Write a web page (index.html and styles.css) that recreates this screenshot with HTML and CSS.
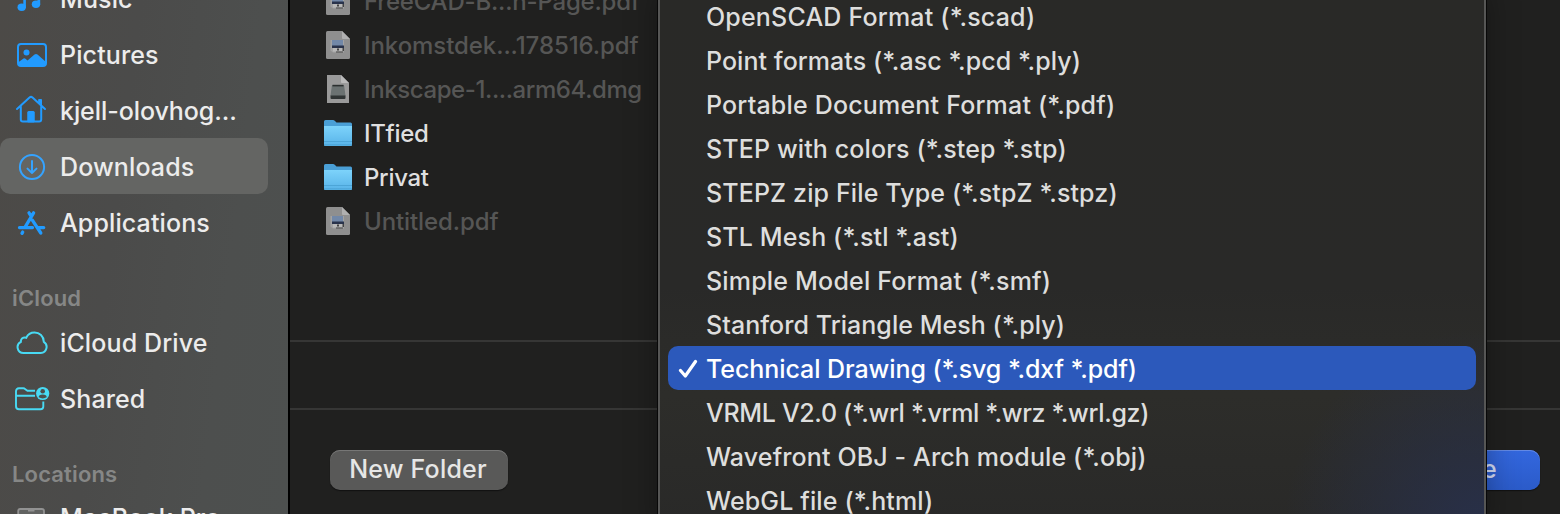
FILE: index.html
```html
<!DOCTYPE html>
<html lang="en">
<head>
<meta charset="utf-8">
<title>Save</title>
<link rel="stylesheet" href="styles.css">
</head>
<body>
<svg class="defs" width="0" height="0">
  <defs>
    <linearGradient id="folderFront" x1="0" y1="0" x2="0" y2="1"><stop offset="0" stop-color="#7dd3fb"/><stop offset="1" stop-color="#58b3e8"/></linearGradient>
    <symbol id="pdf" viewBox="0 0 24 28">
      <path d="M1.500 0H16L24 8V26.500Q24 28 22.500 28H1.500Q0 28 0 26.500V1.500Q0 0 1.500 0Z" fill="#8f8f8f"/>
      <path d="M16 0L24 8H17Q16 8 16 7Z" fill="#b0b0b0"/>
      <path d="M4.500 9h13.500v12.500H7l-2.500-2z" fill="#a3a3a3"/>
      <path d="M6 9h11v6H6z" fill="#7288a8"/>
      <path d="M6 14.500h12v2.500H6z" fill="#29334b"/>
      <path d="M7 17h10v3.500H7z" fill="#b8b8b8"/>
      <path d="M11 17.500h2v2h-2zM10 20.500h7v1h-7zM16.500 17h1.500v3h-1.500z" fill="#444"/>
    </symbol>
    <symbol id="dmg" viewBox="0 0 24 28">
      <path d="M1 0H15L23 8V28H1Z" fill="#9a9a9a"/>
      <path d="M15 0L23 8H16Q15 8 15 7Z" fill="#bababa"/>
      <path d="M7 10h10q1 0 1.200 1L19.500 21h-15L5.800 11Q6 10 7 10z" fill="#6b7272"/>
      <path d="M6.500 9.800h11v1.600h-11z" fill="#2c3030"/>
      <path d="M4.500 20.500h15v2.500q0 1-1 1h-13q-1 0-1-1z" fill="#303535"/>
    </symbol>
    <symbol id="folder" viewBox="0 0 28 26">
      <path d="M0 1.500Q0 0 1.500 0H9Q10 0 11 1L12.500 2.500H26.500Q28 2.500 28 4V24.500Q28 26 26.500 26H1.500Q0 26 0 24.500Z" fill="#4a9fd6"/>
      <path d="M0 6H28V24.500Q28 26 26.500 26H1.500Q0 26 0 24.500Z" fill="url(#folderFront)"/>
      <path d="M0 21.500H28M0 24.800H28" stroke="#489fd2" stroke-width=".8"/>
    </symbol>
  </defs>
</svg>
<div class="dialog">
  <nav class="sidebar">
    <div class="place low">
      <svg class="icon" viewBox="0 0 36 36" fill="#229bff"><ellipse cx="9.700" cy="27.300" rx="4.200" ry="3.700"/><ellipse cx="24" cy="24.300" rx="4.200" ry="3.700"/><path d="M11.300 8L28.200 4V24.500H25.400V11L13.900 13.500V27.500H11.300Z"/></svg>
      <span class="t-music">Music</span></div>
    <div class="place low">
      <svg class="icon" viewBox="0 0 36 36"><rect x="6" y="8.100" width="28" height="21.800" rx="3" fill="none" stroke="#229bff" stroke-width="2"/><circle cx="14.500" cy="16.500" r="3" fill="#229bff"/><path d="M6 26.500L11.500 22.500Q12.500 22 13.500 22.800L15.500 24.500L22.500 18.500Q24 17.400 25.500 18.500L34 26V28Q34 30 31.500 30H8.500Q6 30 6 28Z" fill="#229bff"/></svg>
      <span class="t-pictures">Pictures</span></div>
    <div class="place low">
      <svg class="icon" viewBox="0 0 36 36" fill="none" stroke="#229bff" stroke-width="2" stroke-linecap="round" stroke-linejoin="round"><path d="M5 17L17.500 5.500Q19 4.300 20.500 5.500L33 17M8.800 14.500V27.500Q8.800 29.500 10.800 29.500H27.200Q29.200 29.500 29.200 27.500V14.500"/><path d="M27 7.500H29.500V13L27 10.800Z" fill="#229bff" stroke-width="1"/><path d="M15.800 29.500V20Q15.800 19.500 16.300 19.500H21.700Q22.200 19.500 22.200 20V29.500Z" fill="#229bff" stroke-width="1"/></svg>
      <span class="t-home">kjell-olovhog...</span></div>
    <div class="place low selected">
      <svg class="icon" viewBox="0 0 36 36" fill="none" stroke="#35a3ff" stroke-width="2" stroke-linecap="round" stroke-linejoin="round"><circle cx="20" cy="19" r="12.100"/><path d="M20 13V25M15.500 20.600L20 25L24.500 20.600"/></svg>
      <span class="t-downloads">Downloads</span></div>
    <div class="place low">
      <svg class="icon" viewBox="0 0 36 36" fill="none" stroke="#229bff" stroke-width="3.300" stroke-linecap="round"><path d="M21.600 8.800L12.800 23.600M10.700 28.100L10 29.300M17 8.800L18.300 10.800M20.500 16.300L28.800 29M7.500 23.600H20.500M27 23.600H31.700"/></svg>
      <span class="t-apps">Applications</span></div>
    <h2 class="heading t-icloud">iCloud</h2>
    <div class="place">
      <svg class="icon" viewBox="0 0 36 36" fill="none" stroke="#48daf4" stroke-width="2"><path d="M11.500 28H28.800A6.100 6.100 0 0 0 31.800 16.800C31.700 11.300 27.500 7.500 22.500 7.500C18.500 7.500 15.600 9.800 14.300 12.700C11 11.700 8.600 14 8.900 16.800A5.900 5.900 0 0 0 11.500 28Z"/></svg>
      <span class="t-drive">iCloud Drive</span></div>
    <div class="place">
      <svg class="icon wide" viewBox="0 0 40 36" fill="none" stroke="#48daf4" stroke-width="1.900"><path d="M23 9.800H15.500L13 8Q12.400 7.300 11.200 7.300H7Q4 7.300 4 10.300V25.300Q4 28.300 7 28.300H28.500Q31.300 28.300 31.300 25.600V20.500M4 14.700H23"/><circle cx="30.700" cy="12.500" r="6.600" fill="#48daf4" stroke="none"/><circle cx="30.700" cy="10.200" r="2.300" fill="#4c4e4c" stroke="none"/><path d="M26.700 16.300Q26.700 13.500 30.700 13.500T34.700 16.300Q30.700 18.500 26.700 16.300Z" fill="#4c4e4c" stroke="none"/></svg>
      <span class="t-shared">Shared</span></div>
    <h2 class="heading t-locations">Locations</h2>
    <div class="place high">
      <svg class="icon" viewBox="0 0 36 36" fill="none" stroke="#929292" stroke-width="1.800"><path d="M6.200 27V10Q6.200 8 8.200 8H30Q32 8 32 10V27Z" fill="#626362"/><path d="M16 9H22.500" stroke-width="3"/></svg>
      <span class="t-mac">MacBook Pro</span></div>
  </nav>
  <main class="browser">
    <div class="files">
      <div class="file dim"><svg class="doc"><use href="#pdf"/></svg><span class="f1">FreeCAD-B...n-Page.pdf</span></div>
      <div class="file dim"><svg class="doc"><use href="#pdf"/></svg><span class="f2">Inkomstdek...178516.pdf</span></div>
      <div class="file dim"><svg class="doc"><use href="#dmg"/></svg><span class="f3">Inkscape-1....arm64.dmg</span></div>
      <div class="file"><svg class="folder"><use href="#folder"/></svg><span class="f4">ITfied</span></div>
      <div class="file"><svg class="folder"><use href="#folder"/></svg><span class="f5">Privat</span></div>
      <div class="file dim"><svg class="doc"><use href="#pdf"/></svg><span class="f6">Untitled.pdf</span></div>
    </div>
    <div class="options"></div>
    <footer class="actions">
      <button class="btn"><span>New Folder</span></button>
      <button class="btn primary"><span>Save</span></button>
    </footer>
  </main>
  <div class="menu">
    <div class="item"><span class="m1">OpenSCAD Format (*.scad)</span></div>
    <div class="item"><span class="m2">Point formats (*.asc *.pcd *.ply)</span></div>
    <div class="item"><span class="m3">Portable Document Format (*.pdf)</span></div>
    <div class="item"><span class="m4">STEP with colors (*.step *.stp)</span></div>
    <div class="item"><span class="m5">STEPZ zip File Type (*.stpZ *.stpz)</span></div>
    <div class="item"><span class="m6">STL Mesh (*.stl *.ast)</span></div>
    <div class="item"><span class="m7">Simple Model Format (*.smf)</span></div>
    <div class="item"><span class="m8">Stanford Triangle Mesh (*.ply)</span></div>
    <div class="item active"><svg class="check" viewBox="0 0 20 20"><path d="M2.500 12.500L7.300 18L17.500 3.500" fill="none" stroke="#fff" stroke-width="3.200" stroke-linecap="round" stroke-linejoin="round"/></svg><span class="m9">Technical Drawing (*.svg *.dxf *.pdf)</span></div>
    <div class="item"><span class="m10">VRML V2.0 (*.wrl *.vrml *.wrz *.wrl.gz)</span></div>
    <div class="item"><span class="m11">Wavefront OBJ - Arch module (*.obj)</span></div>
    <div class="item"><span class="m12">WebGL file (*.html)</span></div>
  </div>
</div>
</body>
</html>
```
FILE: styles.css
```css
* { box-sizing: border-box; }
body { margin: 0; background: #20201f; font-family: Inter, "Liberation Sans", sans-serif; font-size: 25px; font-weight: 450; font-feature-settings: "calt" 0; }
.defs { position: absolute; }
.dialog { position: relative; display: flex; width: 1560px; height: 514px; overflow: hidden; }
span { white-space: nowrap; }

.sidebar { flex: none; width: 290px; height: 514px; overflow: hidden; border-right: 2px solid #000; background: linear-gradient(97deg, #4c4a47 0%, #4b4b4a 40%, #4d4f4e 75%, #4d504f 100%); color: #ececec; }
.place { display: flex; align-items: center; gap: 20px; width: 268px; height: 56px; padding-left: 12px; border-radius: 10px; letter-spacing: .12px; }
.place:first-child { margin-top: -30px; }
.place.selected { background: #646563; }
.low span { padding-top: 2px; }
.high span { padding-bottom: 3px; }
.icon { flex: none; width: 36px; height: 36px; margin-right: -8px; }
.icon.wide { width: 40px; margin-right: -12px; }
.t-home { letter-spacing: -.08px; }
.heading { margin: 34px 0 0; padding-left: 12px; height: 31px; font-size: 22px; line-height: 29px; font-weight: 600; letter-spacing: .15px; color: #868786; }
.t-locations { margin-top: 32px; height: 32px; line-height: 31px; }

.browser { flex: 1; display: flex; flex-direction: column; background: #20201f; }
.files { height: 342px; flex: none; overflow: hidden; border-bottom: 2px solid #363635; }
.file { display: flex; align-items: center; height: 44px; padding-left: 34px; color: #dfdfdf; font-size: 24px; letter-spacing: -.3px; }
.file:first-child { margin-top: -21px; }
.file.dim { color: #565655; letter-spacing: -.1px; }
.doc { width: 24px; height: 28px; margin: 0 14px 0 2px; }
.folder { width: 28px; height: 26px; margin-right: 12px; }
.file .f1 { letter-spacing: -.2px; }
.file .f2 { letter-spacing: -.07px; }
.file .f3 { letter-spacing: -.4px; }
.options { flex: none; height: 68px; border-bottom: 2px solid #363635; }
.actions { display: flex; justify-content: space-between; padding: 40px 20px 0 40px; }
.btn { width: 178px; height: 40px; padding: 0 2px 2px 0; border: 0; border-radius: 10px; background: #595958; box-shadow: inset 0 1px #777776, 0 1px 1px #111; color: #e6e6e5; font: inherit; letter-spacing: .2px; }
.primary { background: linear-gradient(#3367de, #2b5bc9); box-shadow: inset 0 1px #6389e4, 0 1px 1px #111; padding: 0 43px 2px 0; text-align: right; color: #d5def6; }

.menu { position: absolute; left: 658px; top: -10px; width: 828px; height: 540px; padding: 4px 8px; border: 2px solid #565655; border-width: 0 2px; background: radial-gradient(ellipse 200px 200px at 100% 100%, #28304a, transparent), linear-gradient(#292927 0%, #292928 55%, #2d2d2a 75%, #292928 100%); box-shadow: 0 0 0 1px #080808, 0 0 30px rgba(0,0,0,.35); color: #dededd; }
.item { display: flex; align-items: center; height: 44px; padding-left: 38px; border-radius: 10px; letter-spacing: .13px; }
.item span { padding-top: 2px; }
.item.active { padding-left: 10px; background: #2c59bb; color: #fff; }
.check { width: 20px; height: 20px; margin-right: 8px; }
.m1, .m3, .m7 { letter-spacing: .19px; }
.m2, .m8 { letter-spacing: .05px; }
.m9 { letter-spacing: -.07px; }
.m10 { letter-spacing: -.33px; }
```
